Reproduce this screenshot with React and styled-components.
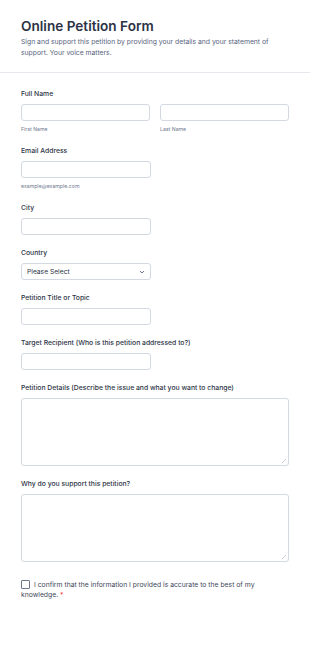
import styled, { createGlobalStyle } from "styled-components";

const GlobalStyle = createGlobalStyle`
  * { box-sizing: border-box; }
  body {
    margin: 0;
    background: #fff;
    font-family: Inter, "Liberation Sans", sans-serif;
    color: #2c3345;
  }
`;

export default function App() {
  return (
    <>
      <GlobalStyle />
      <Page>
        <Header>
          <Title>Online Petition Form</Title>
          <Subtitle>
            Sign and support this petition by providing your details and your
            statement of support. Your voice matters.
          </Subtitle>
        </Header>
        <Form>
          <Field>
            <Label>Full Name</Label>
            <Row>
              <Col>
                <Input />
                <Sub>First Name</Sub>
              </Col>
              <Col>
                <Input />
                <Sub>Last Name</Sub>
              </Col>
            </Row>
          </Field>
          <Field>
            <Label>Email Address</Label>
            <Input $short />
            <Sub>example@example.com</Sub>
          </Field>
          <Field>
            <Label>City</Label>
            <Input $short />
          </Field>
          <Field>
            <Label>Country</Label>
            <Select>
              <span>Please Select</span>
              <svg width="6" height="4" viewBox="0 0 6 4">
                <path d="M1 1 L3 3 L5 1" fill="none" stroke="#57647e" strokeWidth="0.9" />
              </svg>
            </Select>
          </Field>
          <Field>
            <Label>Petition Title or Topic</Label>
            <Input $short />
          </Field>
          <Field>
            <Label>Target Recipient (Who is this petition addressed to?)</Label>
            <Input $short />
          </Field>
          <Field>
            <Label>Petition Details (Describe the issue and what you want to change)</Label>
            <TextArea />
          </Field>
          <Field>
            <Label>Why do you support this petition?</Label>
            <TextArea />
          </Field>
          <Consent>
            <Box />
            I confirm that the information I provided is accurate to the best
            of my knowledge. <Req>*</Req>
          </Consent>
        </Form>
      </Page>
    </>
  );
}

const Page = styled.div`
  width: 310px;
  min-height: 668px;
  background: #fff;
`;

const Header = styled.header`
  padding: 17px 21px 14px;
  border-bottom: 1px solid #e6e8ee;
`;

const Title = styled.h1`
  margin: 0;
  font-size: 13.6px;
  line-height: 19px;
  font-weight: 600;
  color: #2c3345;
`;

const Subtitle = styled.p`
  margin: 0;
  font-size: 6.8px;
  line-height: 11px;
  color: #57647e;
`;

const Form = styled.div`
  padding: 16px 21px 40px;
  display: flex;
  flex-direction: column;
  gap: 13px;
`;

const Field = styled.div`
  display: flex;
  flex-direction: column;
`;

const Label = styled.div`
  font-size: 6.8px;
  line-height: 10px;
  font-weight: 500;
  color: #2c3345;
  margin-bottom: 5px;
`;

const Row = styled.div`
  display: flex;
  gap: 10px;
`;

const Col = styled.div`
  flex: 1;
  display: flex;
  flex-direction: column;
`;

const Input = styled.div`
  width: ${(p) => (p.$short ? "130px" : "100%")};
  height: 17px;
  border: 1px solid #d3d8e2;
  border-radius: 3px;
  background: #fff;
`;

const Sub = styled.div`
  font-size: 5.2px;
  line-height: 8px;
  margin-top: 4px;
  color: #6f7a8f;
`;

const Select = styled.div`
  width: 130px;
  height: 17px;
  border: 1px solid #d3d8e2;
  border-radius: 3px;
  display: flex;
  align-items: center;
  justify-content: space-between;
  padding: 0 5px 0 5px;
  font-size: 6.7px;
  color: #2c3345;
`;

const TextArea = styled.div`
  position: relative;
  width: 100%;
  height: 68px;
  border: 1px solid #d3d8e2;
  border-radius: 3px;
  &::after {
    content: "";
    position: absolute;
    right: 2px;
    bottom: 2px;
    width: 4px;
    height: 4px;
    background: linear-gradient(135deg, transparent 45%, #c3c8d2 45%, #c3c8d2 55%, transparent 55%);
  }
`;

const Consent = styled.p`
  margin: 5px 0 0;
  max-width: 235px;
  font-size: 6.8px;
  line-height: 10px;
  color: #40495b;
`;

const Box = styled.span`
  display: inline-block;
  vertical-align: -2px;
  width: 9px;
  height: 9px;
  border: 1px solid #6f7a8f;
  border-radius: 1px;
  margin-right: 4px;
`;

const Req = styled.span`
  color: #f23a3c;
`;
